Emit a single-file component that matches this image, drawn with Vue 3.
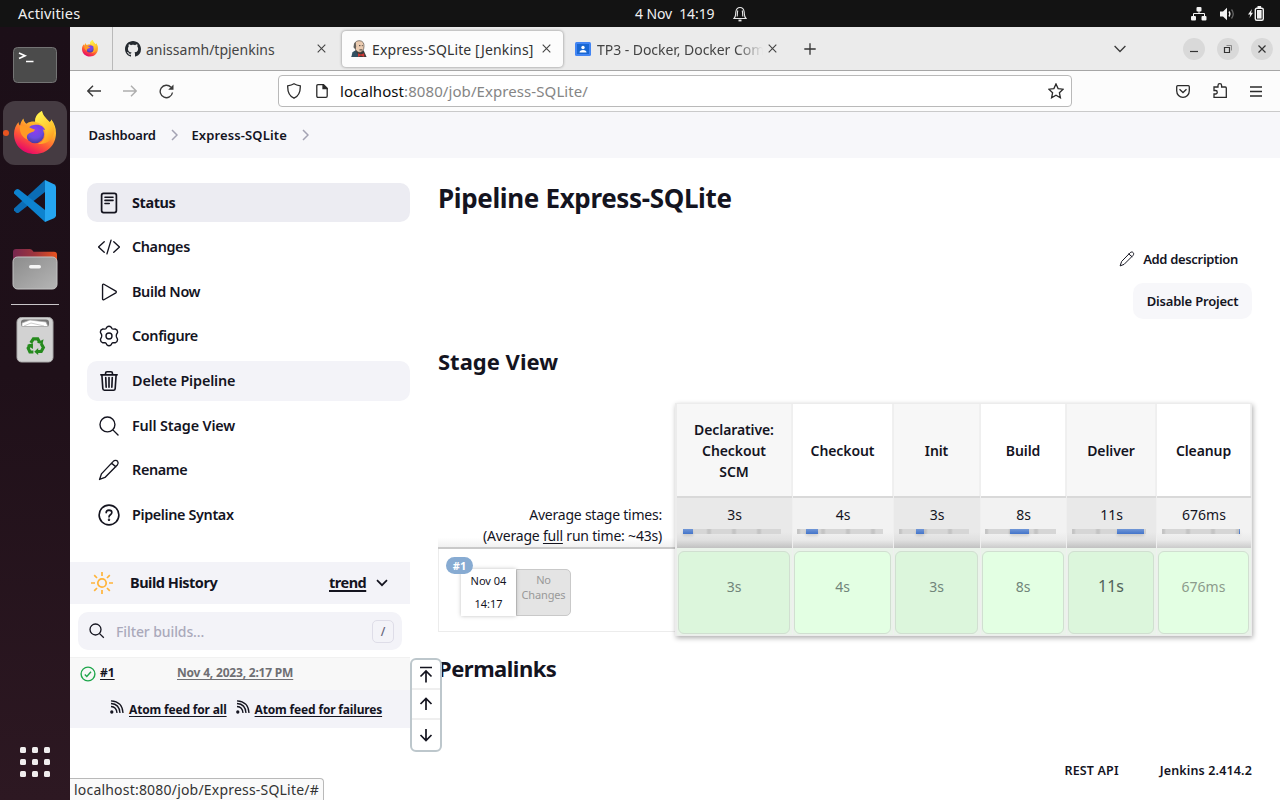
<script setup>
const tasks = [
  { label: 'Status', icon: 'status', state: 'active' },
  { label: 'Changes', icon: 'code' },
  { label: 'Build Now', icon: 'play' },
  { label: 'Configure', icon: 'gear' },
  { label: 'Delete Pipeline', icon: 'trash', state: 'hover wide' },
  { label: 'Full Stage View', icon: 'search', state: 'wide' },
  { label: 'Rename', icon: 'pencil' },
  { label: 'Pipeline Syntax', icon: 'help' },
]
const stages = [
  { name: 'Declarative: Checkout SCM', time: '3s', left: 6, bar: 98, start: 0, run: 10 },
  { name: 'Checkout', time: '4s', left: 4, bar: 86, start: 9, run: 12 },
  { name: 'Init', time: '3s', left: 5, bar: 70, start: 17, run: 8 },
  { name: 'Build', time: '8s', left: 4, bar: 71, start: 25, run: 19 },
  { name: 'Deliver', time: '11s', left: 5, bar: 74, start: 45, run: 27, big: true },
  { name: 'Cleanup', time: '676ms', left: 5, bar: 78, start: 77, run: 1, faint: true },
]
const dots = [0, 1, 2, 3, 4, 5, 6, 7, 8]
</script>

<template>
  <svg class="defs" width="0" height="0">
    <defs>
      <linearGradient id="fox" x1=".8" y1="0" x2=".3" y2="1">
        <stop offset="0" stop-color="#fff14a" /><stop offset=".38" stop-color="#ffb52b" />
        <stop offset=".68" stop-color="#ff5a35" /><stop offset="1" stop-color="#e5006d" />
      </linearGradient>
      <linearGradient id="flame" x1=".3" y1="0" x2=".8" y2="1">
        <stop offset="0" stop-color="#fff44f" /><stop offset=".6" stop-color="#ffc32e" /><stop offset="1" stop-color="#ff8a20" />
      </linearGradient>
      <radialGradient id="globe" cx=".5" cy=".3" r=".7">
        <stop offset="0" stop-color="#8f3cf0" /><stop offset=".6" stop-color="#6b4be0" /><stop offset="1" stop-color="#4a3a9e" />
      </radialGradient>
      <linearGradient id="folder" x1="0" x2="1"><stop offset="0" stop-color="#77274f" /><stop offset=".5" stop-color="#a0353c" /><stop offset="1" stop-color="#e95420" /></linearGradient>
      <linearGradient id="grey" x1="0" y1="0" x2="1" y2="1"><stop offset="0" stop-color="#8c8c8c" /><stop offset="1" stop-color="#b5b5b5" /></linearGradient>
      <symbol id="firefox" viewBox="0 0 42 44">
        <path fill="url(#fox)" d="M21 43C9 43 0 34.500 0 23c0-5 2-9 4.500-12 .2 1.800.7 2.800 1.500 3.600C6.500 11.500 8 9 9.500 7.500c.3 2.500 1.200 4 3 5.200 3-2.300 7-2.200 8.500-2C21 5 24 2 28 0c.5 4 4 7 7.500 11 1.500-.2 1.500-1.500 1.700-2.500C40.500 12.500 42 17 42 22c0 12-9 21-21 21z" />
        <path fill="url(#flame)" d="M28 0c-4.500 3-7 6-6.600 11 6 1 11 5 10 12-1 7-5 9-8 10 10 1 16-5 17-13 .3-4-1-8-3.200-11.500 0 1.500-.5 2.300-1.700 2.500C32 7.500 28.500 5 28 0z" />
        <circle cx="21" cy="23" r="9.200" fill="url(#globe)" />
        <path fill="#ff9a25" d="M6 15c5-2.500 8 1 15 3.500-1 3-4 2.500-6 4-2 1-3 4-1 6.500C9 27 5 22 6 15z" />
        <path fill="#7a3de8" d="M21 14c5-1 9 2 10 5l-5-1z" />
      </symbol>
    </defs>
  </svg>

  <div class="desktop">
    <header class="topbar">
      <span class="activities">Activities</span>
      <span class="clock">4 Nov&nbsp; 14:19</span>
      <svg class="bell" viewBox="0 0 14 16" width="14" height="16" fill="none" stroke="#e8e8e8" stroke-width="1.100"><path d="M1 12.500c2-2 1.500-4 1.800-6.500C3.200 3 5 1.500 7 1.500S10.800 3 11.200 6c.3 2.500-.2 4.500 1.800 6.500z" /><path d="M4.800 4.500C4.200 6 4.500 8 4.200 10.500M9.200 4.500c.6 1.500.3 3.500.6 6" /><path d="M5.500 14.500h3" stroke-width="1.800" /></svg>
      <div class="tray">
        <svg viewBox="0 0 16 14" width="16" height="14" fill="#f2f2f2"><rect x="5.500" y="0" width="5" height="4.500" rx="1" /><rect x="0" y="9" width="5" height="4.500" rx="1" /><rect x="10.500" y="9" width="5" height="4.500" rx="1" /><path d="M2.500 9V6.500h11V9M8 4v2.500" fill="none" stroke="#f2f2f2" /></svg>
        <svg viewBox="0 0 15 14" width="15" height="14" fill="#f2f2f2"><path d="M0 4.500h3L7 .8v12.400L3 9.500H0z" /><path d="M9 4.500q1.800 2.500 0 5" fill="none" stroke="#f2f2f2" stroke-width="1.300" /><path d="M11.500 2.500q3.500 4.500 0 9" fill="none" stroke="#666" stroke-width="1.300" /></svg>
        <svg viewBox="0 0 17 15" width="17" height="15"><path fill="#f2f2f2" d="M4 3 0 8.500h2.200L1.500 12 5 6.800H3z" /><rect x="7.300" y="2.300" width="8" height="12" rx="1.500" fill="none" stroke="#f2f2f2" stroke-width="1.400" /><rect x="9" y="4" width="4.600" height="8.600" fill="#f2f2f2" /><rect x="9.500" y="0" width="3.600" height="2" fill="#f2f2f2" /></svg>
      </div>
    </header>

    <div class="below">
      <nav class="dock">
        <div class="slot"><svg class="term" viewBox="0 0 44 36" width="44" height="36"><rect x=".5" y=".5" width="43" height="35" rx="4" fill="#4b4b4b" stroke="#747474" /><path d="m6 6 6 2.700L6 11.500M13 14.500h7.500" fill="none" stroke="#fff" stroke-width="1.700" /></svg></div>
        <div class="slot current"><svg width="42" height="44"><use href="#firefox" /></svg></div>
        <div class="slot"><svg viewBox="0 0 42 42" width="42" height="42"><path fill="#0b6db5" d="M0 28.500 31 0v12L5 32.500q-1.500 1-3 0l-2-2q-.8-1 0-2z" /><path fill="#0d83cf" d="M0 13.500q-.8-1 0-2l2-2q1.500-1 3 0L31 30v12z" /><path fill="#25a5f0" d="m31 0 9 4.200q2 1 2 3v28q0 2-2 3L31 42z" /></svg></div>
        <div class="slot"><svg viewBox="0 0 46 42" width="46" height="42"><path fill="url(#folder)" d="M1 4q0-3 3-3h14q2 0 3.500 2.700H42q3 0 3 3V20H1z" /><rect x="1" y="9" width="44" height="32" rx="4.500" fill="url(#grey)" stroke="#c4c4c4" /><rect x="17" y="17" width="12" height="3.500" rx="1.700" fill="#f6f6f6" /></svg></div>
        <i class="rule"></i>
        <div class="slot bin"><svg viewBox="0 0 38 46" width="38" height="46"><rect x="1" y=".5" width="36" height="44.500" rx="4.500" fill="#d2d2d2" stroke="#aaa" /><rect x="5" y="2.500" width="28" height="7.500" rx="3" fill="#777" /><path d="M6 9.500V6l8-3 16 2 2 4.500z" fill="#fff" stroke="#aaa" stroke-width=".7" /><path d="m8 9 7-3 13 3" fill="none" stroke="#aaa" stroke-width=".6" /><g transform="translate(2.600 3.200) scale(.87)"><g fill="none" stroke="#258a1d" stroke-width="3.600"><path d="m14 26 3-4.500h5l2 3.500M26 27l2.500 4.500-2.500 4.500h-5M17 36.500h-4L11 32l2.500-4" /></g><path fill="#258a1d" d="m21 26 6.500 1.500 1.200-5.500zM22.500 32v8L18 36.300zM9.500 28.500l7-2v6.500z" /></g></svg></div>
        <div class="grid"><i v-for="d in dots" :key="d"></i></div>
      </nav>

      <section class="window">
        <div class="tabs">
          <div class="pinned"><svg width="16" height="17"><use href="#firefox" /></svg></div>
          <div class="tab first">
            <svg viewBox="0 0 16 16" width="16" height="16" fill="#24292f"><path d="M8 0C3.580 0 0 3.580 0 8c0 3.540 2.290 6.530 5.470 7.590.4.070.55-.17.55-.38 0-.19-.01-.82-.01-1.490-2.010.37-2.530-.49-2.690-.94-.09-.23-.48-.94-.82-1.130-.28-.15-.68-.52-.01-.53.63-.01 1.080.58 1.230.82.72 1.210 1.870.87 2.330.66.070-.52.28-.87.51-1.070-1.780-.2-3.640-.89-3.640-3.950 0-.87.31-1.590.82-2.150-.08-.2-.36-1.020.08-2.120 0 0 .67-.21 2.200.82.64-.18 1.320-.27 2-.27s1.360.09 2 .27c1.530-1.040 2.200-.82 2.200-.82.44 1.100.16 1.920.08 2.120.51.56.82 1.270.82 2.150 0 3.070-1.870 3.750-3.650 3.950.29.25.54.73.54 1.480 0 1.070-.01 1.930-.01 2.200 0 .21.15.46.55.38A8.010 8.010 0 0 0 16 8c0-4.420-3.580-8-8-8z" /></svg>
            <span class="label gh">anissamh/tpjenkins</span>
            <svg class="x" viewBox="0 0 9 9" width="9" height="9"><path d="m.7.7 7.600 7.600M8.300.7.7 8.300" /></svg>
          </div>
          <div class="tab active">
            <svg viewBox="0 0 16 18" width="16" height="17"><path fill="#3b3b3b" d="M2 14 5 10l8 1 3 7H0z" /><path fill="#335061" d="m1 13 3-2 5 7H0z" /><path fill="#ebcbb0" stroke="#514b45" stroke-width=".7" d="M3 6C3 2 6 .5 9 .8c3 .3 4.500 2.500 4.300 6-.2 3.500-1.500 5.700-4 6.200-3 .3-5-2-5.500-4.500Q2 8 3 6z" /><path fill="#63605c" d="M2.500 8c0-4 .5-5 2-6L5 7l-.5 3z" /><path d="M8 6h1.500M11 6h1M8.500 10.500h3" stroke="#333" /><path fill="#d33833" d="m7 14 3 1.300L13.500 14v4L10 16.500 7 18z" /></svg>
            <span class="label jk">Express-SQLite [Jenkins]</span>
            <svg class="x" viewBox="0 0 9 9" width="9" height="9"><path d="m.7.7 7.600 7.600M8.300.7.7 8.300" /></svg>
          </div>
          <div class="tab last">
            <svg viewBox="0 0 16 14" width="16" height="14"><rect width="16" height="14" rx="1.500" fill="#4285f4" /><rect x="2" y="2" width="12" height="10" fill="#1967d2" /><circle cx="8" cy="5.500" r="1.700" fill="#fff" /><path fill="#fff" d="M4.500 10.500q0-2.500 3.500-2.500t3.500 2.500z" /></svg>
            <span class="label dk">TP3 - Docker, Docker Com</span>
            <svg class="x" viewBox="0 0 9 9" width="9" height="9"><path d="m.7.7 7.600 7.600M8.300.7.7 8.300" /></svg>
          </div>
          <svg class="plus" viewBox="0 0 12 12" width="12" height="12"><path d="M6 .3v11.400M.3 6h11.400" stroke="#333" stroke-width="1.300" /></svg>
          <div class="controls">
            <svg class="down" viewBox="0 0 12 8" width="12" height="8" fill="none" stroke="#3a3a3a" stroke-width="1.300"><path d="m.6 1 5.400 5.500L11.400 1" /></svg>
            <b><svg viewBox="0 0 22 22"><path d="M7 13.500h8" /></svg></b>
            <b><svg viewBox="0 0 22 22"><path d="M7.500 9.500h5v5h-5z" /><path d="M9.500 7.500h5v5" stroke-width=".8" stroke="#777" /></svg></b>
            <b><svg viewBox="0 0 22 22"><path d="m7.500 7.500 7 7M14.500 7.500l-7 7" /></svg></b>
          </div>
        </div>

        <div class="toolbar">
          <svg class="nav" viewBox="0 0 14 12" width="14" height="12"><path d="M14 6H1M6 .7.800 6 6 11.300" /></svg>
          <svg class="nav off" viewBox="0 0 14 12" width="14" height="12"><path d="M0 6h13M8 .7 13.200 6 8 11.300" /></svg>
          <svg class="nav reload" viewBox="0 0 15 15" width="15" height="15"><path d="M13.500 8.500A6.200 6.200 0 1 1 12 3.300" /><path d="M14.500.5v5.300H9.200z" fill="#3a3a3a" stroke="none" /></svg>
          <div class="url">
            <svg viewBox="0 0 14 16" width="14" height="16" class="line"><path d="M7 .8C9 2 11 2.500 13.300 2.900 13.500 9 12 13 7 15.200 2 13 .5 9 .7 2.900 3 2.500 5 2 7 .8z" /></svg>
            <svg viewBox="0 0 12 14" width="12" height="14" class="line page"><path d="M.8 2Q.8.700 2 .7h5.500l3.700 3.600V12q0 1.300-1.200 1.300H2Q.8 13.300.8 12z" /><path d="M7 .7v4h4z" fill="#222" /></svg>
            <span><em>localhost</em>:8080/job/Express-SQLite/</span>
            <svg class="line star" viewBox="0 0 16 16" width="16" height="16"><path d="m8 .9 2.100 4.700 5 .6-3.700 3.500 1 5.100L8 12.300l-4.400 2.500 1-5.100L.9 6.200l5-.6z" /></svg>
          </div>
          <div class="acts">
            <svg class="line" viewBox="0 0 14 13" width="14" height="13"><path d="M1.700.7h10.600q1 0 1 1v4C13.300 9.500 10.500 12.300 7 12.300S.7 9.500.7 5.700v-4q0-1 1-1z" /><path d="M3.500 4.300 7 7.500l3.500-3.200" /></svg>
            <svg class="line" viewBox="0 0 14 16" width="14" height="16"><path d="M5 4V2.500a1.800 1.800 0 0 1 3.600 0V4h3.700q1 0 1 1v9.300H1V11h1.500a1.700 1.700 0 0 0 0-3.500H1V4z" /></svg>
            <svg class="line" viewBox="0 0 12 11" width="12" height="11"><path d="M0 1h12M0 5.500h12M0 10h12" /></svg>
          </div>
        </div>

        <div class="crumbs">
          <span class="c1">Dashboard</span><svg viewBox="0 0 7 12" width="7" height="12"><path d="m1 1 5 5-5 5" /></svg>
          <span class="c2">Express-SQLite</span><svg viewBox="0 0 7 12" width="7" height="12"><path d="m1 1 5 5-5 5" /></svg>
        </div>

        <div class="page-body">
          <aside>
            <ul class="tasks">
              <li v-for="t in tasks" :key="t.label" :class="t.state">
                <svg viewBox="0 0 512 512" width="22" height="22" class="ico">
                  <g v-if="t.icon === 'status'" stroke-width="40"><rect x="84" y="34" width="344" height="444" rx="46" /><path d="M162 122h188M162 195h188M162 268h100" stroke-width="36" /></g>
                  <path v-else-if="t.icon === 'code'" d="M145 378 12 256l133-122M367 378l133-122-133-122M304 96l-96 320" />
                  <path v-else-if="t.icon === 'play'" d="M106 96v320c0 17 17 27 31 20l278-160c14-9 14-31 0-40L137 76c-14-8-31 3-31 20z" />
                  <g v-else-if="t.icon === 'gear'"><circle cx="256" cy="256" r="70" /><path d="M205 50q51-45 102 0l20 38q10 8 25 8l48-3q65 20 54 83l-24 44q-8 36 0 60l24 52q6 60-54 82l-48-3q-20 2-28 14l-17 36q-51 45-102 0l-17-36q-8-12-28-14l-48 3q-60-22-54-82l24-52q8-24 0-60l-24-44q-11-63 54-83l48 3q15 0 25-8z" /></g>
                  <path v-else-if="t.icon === 'trash'" stroke-width="38" d="m90 112 22 320c1 20 14 38 38 38h212c24 0 36-18 38-38l22-320M66 112h380M176 112V75q0-35 34-35h92q34 0 34 35v37M256 176v224M180 176l10 224M332 176l-10 224" />
                  <path v-else-if="t.icon === 'search'" d="M220 46a174 174 0 1 0 0 348 174 174 0 0 0 0-348zM346 346l120 120" />
                  <path v-else-if="t.icon === 'pencil'" d="M355 55c30-34 82-30 102 0 20 28 14 62-8 86L162 428 36 476 80 346zM314 96l100 84" />
                  <g v-else stroke-width="38"><circle cx="256" cy="256" r="230" /><path d="M190 202q0-55 66-58 66 0 66 56c0 54-66 46-66 102" /><circle cx="256" cy="364" r="10" fill="#14141f" /></g>
                </svg>
                <span>{{ t.label }}</span>
              </li>
            </ul>
            <div class="history">
              <svg viewBox="0 0 22 22" width="22" height="22" fill="none" stroke="#ffb43a" stroke-width="1.700"><circle cx="11" cy="11" r="4.200" /><path d="M11 0v4M11 18v4M0 11h4M18 11h4M3.200 3.200 6 6M16 16l2.800 2.800M3.200 18.800 6 16M16 6l2.800-2.800" /></svg>
              <strong>Build History</strong><u>trend</u>
              <svg class="chev" viewBox="0 0 12 8" width="12" height="8"><path d="m1 1.200 5 5 5-5" /></svg>
            </div>
            <div class="filter">
              <svg viewBox="0 0 16 16" width="16" height="16" class="thin"><circle cx="6.500" cy="6.500" r="5.500" /><path d="m10.600 10.600 4.200 4.200" /></svg>
              <span>Filter builds...</span><kbd>/</kbd>
            </div>
            <div class="build">
              <svg viewBox="0 0 16 16" width="16" height="16" fill="none" stroke="#1ea64b" stroke-width="1.400"><circle cx="8" cy="8" r="6.900" /><path d="m4.800 8.500 2 2 4.200-4.700" /></svg>
              <u class="num">#1</u><u class="when">Nov 4, 2023, 2:17 PM</u>
            </div>
            <div class="feeds">
              <template v-for="f in ['all', 'failures']" :key="f">
                <svg viewBox="0 0 14 14" width="14" height="14" class="thin"><circle cx="1.800" cy="12" r="1" fill="#14141f" /><path d="M1 6.500q5.500.3 6 6.500M1 3.500q8.500.5 9 9.500M1 .8Q12.500 1.500 13 13" /></svg>
                <u :class="f">Atom feed for {{ f }}</u>
              </template>
            </div>
            <div class="scroller">
              <b><svg viewBox="0 0 14 17" width="14" height="17"><path d="M1 1.500h12M7 16.500V6M1.500 10.500 7 5l5.500 5.500" /></svg></b>
              <b><svg viewBox="0 0 14 14" width="14" height="14"><path d="M7 13V2M1.500 7 7 1.500 12.500 7" /></svg></b>
              <b><svg viewBox="0 0 14 14" width="14" height="14"><path d="M7 1v11M1.500 7 7 12.500 12.500 7" /></svg></b>
            </div>
            <div class="statusbar">localhost:8080/job/Express-SQLite/#</div>
          </aside>

          <main>
            <h1>Pipeline Express-SQLite</h1>
            <div class="desc"><svg viewBox="0 0 512 512" width="16" height="16" class="ico"><path d="M355 55c30-34 82-30 102 0 20 28 14 62-8 86L162 428 36 476 80 346zM314 96l100 84" /></svg><span>Add description</span></div>
            <button class="disable">Disable Project</button>
            <h2>Stage View</h2>
            <div class="stage">
              <div class="meta">
                <div class="avg"><div>Average stage times:</div><div class="full">(Average <u>full</u> run time: ~43s)</div></div>
                <div class="run">
                  <div class="date"><span>Nov 04</span><span>14:17</span><b class="badge">#1</b></div>
                  <div class="none">No<br />Changes</div>
                </div>
              </div>
              <div class="table">
                <div v-for="s in stages" :key="s.name" class="col">
                  <div class="head"><span>{{ s.name }}</span></div>
                  <div class="mean"><span>{{ s.time }}</span>
                    <div class="bar" :style="{ width: s.bar + 'px', marginLeft: s.left + 'px' }"><i :style="{ width: s.run + 'px', marginLeft: s.start + 'px' }"></i></div>
                  </div>
                  <div class="ok"><div :class="{ big: s.big, faint: s.faint }">{{ s.time }}</div></div>
                </div>
              </div>
            </div>
            <h2 class="perma">Permalinks</h2>
            <footer><span class="rest">REST API</span><span class="ver">Jenkins 2.414.2</span></footer>
          </main>
        </div>
      </section>
    </div>
  </div>
</template>

<style>
html, body { margin: 0; height: 800px; overflow: hidden; }
</style>

<style scoped>
* { box-sizing: border-box; }
svg { display: block; flex: none; }
.defs { position: absolute; }
.desktop { width: 1280px; height: 800px; overflow: hidden; font-family: "Noto Sans", sans-serif; font-size: 14px; color: #14141f; background: #fff; white-space: nowrap; }
.topbar { position: relative; height: 27px; background: #131313; color: #f0f0f0; display: flex; align-items: center; line-height: 27px; }
.activities { margin-left: 18px; width: 617px; font-size: 14.600px; letter-spacing: .15px; }
.clock { width: 98px; letter-spacing: -.1px; }
.tray { margin-left: auto; margin-right: 15px; display: flex; gap: 13px; align-items: center; }
.below { display: flex; height: 773px; }
.dock { width: 70px; background: linear-gradient(#1c0f18, #1f1019 45%, #2d1822); display: flex; flex-direction: column; align-items: center; padding-top: 6px; }
.slot { width: 64px; height: 64px; margin-bottom: 4px; border-radius: 12px; display: flex; align-items: center; justify-content: center; position: relative; }
.current { background: #453b42; }
.current::before { content: ""; position: absolute; left: 0; top: 29px; width: 6px; height: 6px; border-radius: 50%; background: #e95420; }
.rule { width: 48px; height: 1px; background: #c9c5c8; margin: -1px 0 3px; }
.grid { margin: auto 0 23px; display: grid; grid-template-columns: repeat(3, 6px); gap: 6px; }
.grid i { width: 6px; height: 6px; border-radius: 1.500px; background: #f0eeee; }
.window { width: 1210px; background: #fff; }
.tabs { height: 44px; background: #ebebeb; border-bottom: 1px solid #a6a6a6; display: flex; align-items: center; color: #444; }
.pinned { width: 43px; height: 43px; border-right: 1px solid #b9b9b9; display: flex; align-items: center; padding-left: 12px; }
.tab { display: flex; align-items: center; height: 36px; }
.first { width: 228px; padding-left: 12px; }
.active { width: 221px; margin: 0 1px; padding-left: 9px; background: #fcfcfc; border-radius: 4px; box-shadow: 0 0 3px rgba(0,0,0,.45); color: #333; }
.last { width: 225px; padding-left: 11px; }
.label { margin-left: 5px; padding-top: 1px; }
.gh { width: 171px; } .jk { width: 171px; letter-spacing: .12px; }
.dk { width: 166px; margin-left: 6px; letter-spacing: -.05px; -webkit-mask-image: linear-gradient(90deg, #000 84%, transparent); mask-image: linear-gradient(90deg, #000 84%, transparent); }
.dk + .x { margin-left: 5px; }
.jk + .x { margin-left: -1px; }
.x { fill: none; stroke: #444; stroke-width: 1.100; }
.plus { margin-left: 15px; }
.controls { margin-left: auto; display: flex; align-items: center; gap: 12px; padding-right: 7px; }
.down { margin-right: 45px; }
.controls b { width: 22px; height: 22px; border-radius: 50%; background: #d9d9d9; }
.controls b svg { fill: none; stroke: #333; stroke-width: 1.200; }
.toolbar { height: 41px; background: #fcfcfc; border-bottom: 1px solid #cacaca; display: flex; align-items: center; padding-left: 17px; }
.nav { fill: none; stroke: #3a3a3a; stroke-width: 1.400; margin-right: 22px; }
.off { opacity: .4; margin-right: 22px; }
.reload { margin-right: 104px; }
.url { width: 794px; height: 32px; border: 1px solid #b9b9b9; border-radius: 4px; background: #fff; display: flex; align-items: center; padding: 0 7px 0 8px; color: #858585; font-size: 15px; }
.url em { font-style: normal; color: #0c0c0c; }
.url span { margin-left: 12px; letter-spacing: .08px; }
.line { fill: none; stroke: #2a2a2a; stroke-width: 1.300; }
.page { margin-left: 15px; }
.star { margin-left: auto; }
.acts { margin-left: auto; padding-right: 18px; display: flex; align-items: center; gap: 23px; }
.crumbs { height: 46px; background: #f7f7fa; display: flex; align-items: center; padding-left: 18.500px; font-size: 13px; font-weight: 600; }
.crumbs svg { fill: none; stroke: #a4a3b3; stroke-width: 1.500; }
.c1 { width: 82px; letter-spacing: -.2px; } .c2 { width: 94px; margin-left: 14px; letter-spacing: .12px; } .c2 + svg { margin-left: 16px; }
.page-body { display: flex; height: 642px; }
aside { width: 340px; position: relative; }
.tasks { list-style: none; margin: 0; padding: 25px 0 0 17px; font-size: 14.400px; line-height: 20px; font-weight: 600; height: 404px; }
.tasks li { height: 39.400px; margin-bottom: 5.200px; border-radius: 10px; display: flex; align-items: center; padding-left: 11px; }
.tasks li span { margin-left: 12px; letter-spacing: -.37px; }
.tasks .wide span { letter-spacing: -.15px; }
.tasks .active { width: auto; margin: 0 0 5.200px; background: #ececf2; box-shadow: none; color: inherit; font-weight: 700; border-radius: 10px; padding-left: 11px; }
.hover { background: #f3f3f8; }
.ico { fill: none; stroke: #14141f; stroke-width: 32; stroke-linecap: round; stroke-linejoin: round; }
.history { height: 42px; background: #f3f3f8; display: flex; align-items: center; padding-left: 21px; font-size: 14.500px; }
.history strong { margin-left: 17px; width: 199px; letter-spacing: -.48px; }
.history strong, .history u { margin-top: -3px; }
u { text-underline-offset: 2px; }
.history u { font-weight: 700; width: 37px; text-decoration-thickness: 2px; letter-spacing: -.5px; }
.chev, .scroller svg { fill: none; stroke: #14141f; stroke-width: 1.700; }
.chev { margin-left: 10px; }
.filter { margin: 8px 8px 7px; height: 38px; border-radius: 10px; background: #f3f3f8; display: flex; align-items: center; padding: 0 8px 0 11px; color: #aaa9bb; font-weight: 500; }
.filter span { margin-left: 11px; letter-spacing: -.1px; }
.thin { fill: none; stroke: #14141f; stroke-width: 1.300; }
kbd { margin-left: auto; width: 22px; height: 23px; border: 1px solid #dedde8; border-radius: 5px; font: 500 12px/21px "Noto Sans", sans-serif; text-align: center; color: #66657a; }
.build { height: 33px; background: #f8f8f8; border-top: 1px solid #f1f1f1; display: flex; align-items: center; padding-left: 10px; font-size: 12px; font-weight: 700; line-height: 26px; }
.build u { margin-top: -3px; }
.num { width: 77px; margin-left: 4px; }
.when { color: #6f6f73; letter-spacing: -.2px; }
.feeds { height: 38px; background: #f3f3f8; display: flex; align-items: center; padding-left: 40px; font-size: 12px; font-weight: 700; }
.feeds svg { margin: -5px 5px 0 0; }
.feeds u { margin-right: 9px; letter-spacing: -.17px; }
.scroller { position: absolute; z-index: 2; left: 340px; top: 500px; width: 32px; height: 94px; border: 2px solid #bdc7cc; border-radius: 6px; background: #fff; display: grid; grid-template-rows: repeat(3, 1fr); }
.scroller b { display: grid; place-items: center; border-bottom: 2px solid #efefef; }
.scroller b:last-child { border: 0; }
.statusbar { position: absolute; left: 0; bottom: 0; width: 254px; height: 22px; padding-left: 4px; line-height: 21px; background: #fafafa; border: 1px solid #b9b9b9; border-width: 1px 1px 0 0; border-radius: 0 4px 0 0; color: #333; font-size: 14px; letter-spacing: .2px; }
main { width: 842px; padding-left: 28px; padding-right: 0; display: flex; flex-direction: column; }
h1, h2 { margin: 0; font-weight: 700; }
h1 { font-size: 26px; line-height: 36px; margin-top: 22px; letter-spacing: -.35px; }
.stage, .desc, .disable, footer { margin-right: 0; }
.desc, .disable { align-self: flex-end; font-size: 13px; font-weight: 600; letter-spacing: -.2px; }
.desc { display: flex; align-items: center; gap: 8px; margin: 33px 14px 0 0; height: 20px; letter-spacing: -.33px; }
.disable { margin: 14px 0 0; width: 119px; height: 36px; border: 0; border-radius: 10px; background: #f7f7fa; padding: 0; font-family: inherit; color: inherit; }
h2 { font-size: 22px; line-height: 30px; letter-spacing: 0; margin-top: 27px; }
.stage { display: flex; margin-top: 27px; height: 233px; }
.meta { width: 237px; padding-top: 92px; }
.avg { height: 54px; text-align: right; padding: 9px 13px 0 0; line-height: 21px; border-bottom: 2px solid #c9c9c9; background: linear-gradient(transparent 82%, #f1f1f1); letter-spacing: -.23px; }
.full { letter-spacing: -.2px; }
.run { height: 83px; border: solid #ececec; border-width: 0 0 1px 1px; padding: 20px 0 0 22px; display: flex; font-size: 11px; }
.date { position: relative; width: 55px; height: 47px; background: #fff; box-shadow: 0 0 4px rgba(0,0,0,.25); display: flex; flex-direction: column; line-height: 23px; text-align: center; }
.badge { position: absolute; left: -15px; top: -12px; width: 27px; height: 17px; border-radius: 9px; background: #87abd2; color: #fff; line-height: 17px; }
.none { width: 55px; height: 47px; border: 1px solid #c9c9c9; border-radius: 0 5px 5px 0; background: #e4e4e4; color: #999; line-height: 15px; padding-top: 2px; text-align: center; letter-spacing: -.15px; }
.table { width: 577px; border: 1px solid #ececec; border-left-width: 2px; background: #efefef; box-shadow: 1px 2px 5px rgba(0,0,0,.32); display: grid; grid-template-columns: 115px 100px 86px 85px 89px 94px; gap: 1px; }
.col { display: flex; flex-direction: column; }
.head { height: 92px; background: #fff; border: solid #f0f0f0; border-width: 0 1px 0 0; display: grid; place-items: center; text-align: center; font-weight: 600; line-height: 21px; white-space: normal; padding: 1px 13px 0; letter-spacing: -.1px; }
.mean { height: 52px; border-top: 2px solid #d9d9d9; background: linear-gradient(#f2f2f2 68%, #eaeaea 84%, #cbcbcb); padding-top: 6px; text-align: center; line-height: 21px; }
.mean span { display: block; }
.bar { height: 5px; margin-top: 4px; background: repeating-linear-gradient(90deg, #c4c4c4 0 2px, #d6d6d6 4px 23px, #c4c4c4 25px); }
.bar i { display: block; height: 5px; background: linear-gradient(#7197d6, #4374ca); box-shadow: 0 2px 3px rgba(0,0,0,.12); }
.ok { height: 87px; background: #eaf3ea; padding: 3px 2px 1px 1px; }
.ok div { height: 83px; border: 1px solid #d1dfd1; border-radius: 6px; background: #e3ffe3; text-align: center; line-height: 69px; color: #71857a; }
.ok .big { font-size: 16px; color: #53645b; }
.ok .faint { color: #8c9b8c; }
.col:nth-child(odd) .head { background: #f7f7f7; }
.col:nth-child(odd) .mean { background: linear-gradient(#e9e9e9 68%, #e0e0e0 84%, #c1c1c1); }
.col:nth-child(odd) .ok div { background: #dcf6dc; }
.perma { margin-top: 17px; letter-spacing: -.5px; }
footer { display: flex; justify-content: flex-end; margin-top: 77px; font-size: 12.500px; font-weight: 600; line-height: 22px; letter-spacing: .15px; }
.rest { margin-right: 41px; }
</style>
